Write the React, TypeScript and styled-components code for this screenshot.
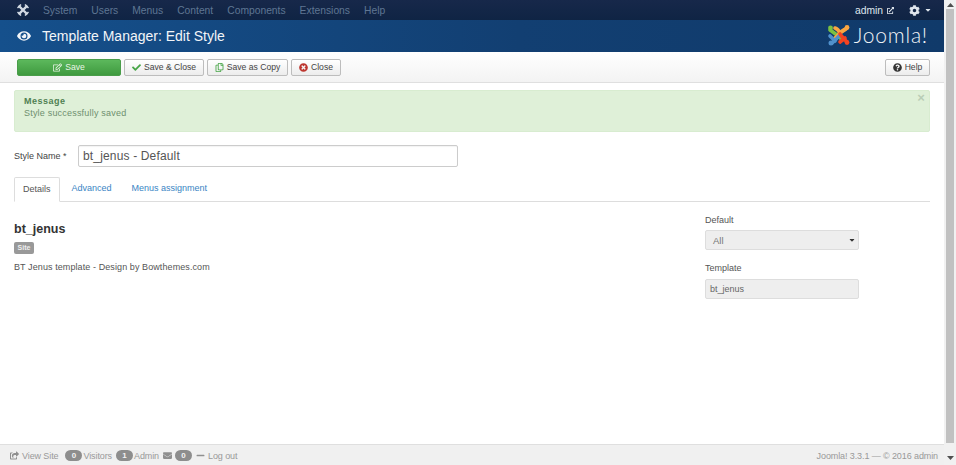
import React from "react";
import styled, { createGlobalStyle } from "styled-components";
import { FaEye, FaCog, FaCheck, FaCaretDown, FaQuestionCircle, FaTimesCircle, FaRegEdit, FaRegCopy, FaExternalLinkAlt, FaEnvelope, FaMinus, FaShareSquare } from "react-icons/fa";

const Global = createGlobalStyle`
  html, body { margin: 0; padding: 0; height: 100%; overflow: hidden; background: #fff; }
  #root { height: 465px; }
  * { box-sizing: border-box; }
  body { font-family: "Liberation Sans", Arial, sans-serif; font-size: 10px; color: #333; }
`;

const Shell = styled.div`display: flex; width: 956px; height: 465px;`;
const Page = styled.div`flex: 1; min-width: 0; display: flex; flex-direction: column;`;

const TopBar = styled.nav`
  height: 20px; flex: none; display: flex; align-items: center; padding: 0 12px 0 17px;
  background: linear-gradient(#17284a, #0f2444); color: #5f7693; font-size: 10.3px;
`;
const TopMenu = styled.div`display: flex; gap: 14px; margin-left: 14px; flex: 1;`;
const TopRight = styled.div`display: flex; align-items: center; color: #dfe6ee; font-size: 10.3px;`;
const SmallIcon = styled.span`display: inline-flex; margin-left: 4px; font-size: 7px;`;
const CogWrap = styled.span`display: inline-flex; align-items: center; margin-left: 15px; gap: 4px; font-size: 11px;`;

const Header = styled.header`
  height: 32px; flex: none; display: flex; align-items: center; padding: 0 16px 0 17px;
  background: linear-gradient(90deg, #15508c, #123f72 55%, #103a6a); color: #f2f5f8;
`;
const HeaderTitle = styled.h1`margin: 0 0 0 11px; font-size: 14px; font-weight: 400; flex: 1; letter-spacing: 0;`;
const Brand = styled.div`display: flex; align-items: center; gap: 4px; margin-top: -3px;`;
const BrandText = styled.span`font-family: Lato, "Liberation Sans", sans-serif; font-weight: 300; font-size: 21px; color: #f2f5f8; line-height: 20px; letter-spacing: .8px;`;

const Toolbar = styled.div`
  height: 31px; flex: none; display: flex; align-items: center; gap: 3px; padding: 0 14px 0 17px;
  background: linear-gradient(#fff, #f3f3f3); border-bottom: 1px solid #dfdfdf;
`;
const Button = styled.button<{ $w: number; $green?: boolean }>`
  width: ${p => p.$w}px; height: 17px; padding: 0; display: inline-flex; align-items: center; justify-content: center; gap: 3px;
  font: 8.6px "Liberation Sans", Arial, sans-serif;
  border-radius: 2px;
  color: ${p => (p.$green ? "#e9f5e6" : "#444")};
  background: ${p => (p.$green ? "linear-gradient(#5cb85c, #3f9a3f)" : "linear-gradient(#fff, #ececec)")};
  border: 1px solid ${p => (p.$green ? "#4a9d4a" : "#bdbdbd")};
`;
const Tint = styled.span<{ $c: string }>`display: inline-flex; color: ${p => p.$c}; font-size: 9px;`;
const Spacer = styled.div`flex: 1;`;

const Content = styled.main`flex: 1; padding: 7px 14px 0 14px; min-height: 0;`;
const Alert = styled.div`
  position: relative; height: 42px; padding: 5px 9px; background: #dff0d8; border-radius: 2px; color: #6e8f6e;
  font-size: 9px; line-height: 11px; letter-spacing: .2px; border: 1px solid #d8ecd0;
`;
const AlertHead = styled.div`font-weight: 700; color: #4f8053; letter-spacing: .5px; margin-bottom: 1px;`;
const AlertClose = styled.span`position: absolute; right: 4px; top: 1px; font-size: 13px; font-weight: 700; line-height: 12px; color: #b9cdb6;`;

const NameRow = styled.div`display: flex; align-items: center; margin-top: 13px;`;
const FieldLabel = styled.label`width: 64px; font-size: 9px; color: #444;`;
const NameInput = styled.div`
  width: 380px; height: 22px; border: 1px solid #ccc; border-radius: 2px; padding-left: 4px;
  font-size: 12px; line-height: 20px; color: #555; letter-spacing: .16px; box-shadow: inset 0 1px 1px rgba(0,0,0,.05);
`;
const Tabs = styled.div`display: flex; margin-top: 10px; height: 25px; border-bottom: 1px solid #ddd; font-size: 9px;`;
const Tab = styled.div<{ $active?: boolean }>`
  height: 25px; padding: 0 10px; line-height: 23px;
  color: ${p => (p.$active ? "#555" : "#3a85c4")};
  ${p => p.$active && "padding: 0 8px; margin-right: 2px; border: 1px solid #ddd; border-bottom-color: #fff; border-radius: 2px 2px 0 0; background:#fff;"}
`;
const Columns = styled.div`display: flex; justify-content: space-between; padding-top: 13px;`;
const Left = styled.div``;
const StyleTitle = styled.h2`margin: 7px 0 0; font-size: 12.5px; line-height: 15px; font-weight: 700; color: #333;`;
const Badge = styled.span`
  display: block; width: 20px; height: 12px; margin-top: 5px; background: #999; color: #eee; border-radius: 2px;
  font-size: 7px; font-weight: 700; line-height: 12px; text-align: center;
`;
const Desc = styled.p`margin: 8px 0 0; font-size: 9px; line-height: 11px; color: #555; letter-spacing: .09px;`;
const Right = styled.div`width: 154px; margin-right: 71px;`;
const SideLabel = styled.div`font-size: 9px; line-height: 11px; color: #555; margin-bottom: 4px;`;
const SideBox = styled.div`
  width: 154px; height: 20px; background: #eee; border: 1px solid #ddd; border-radius: 2px; padding-left: 7px;
  display: flex; align-items: center; justify-content: space-between; font-size: 9.5px; color: #777; margin-bottom: 13px;
`;
const SideValue = styled(SideBox)`padding-left: 4px; font-size: 9px; color: #666; margin: 5px 0 0;`;
const SelectArrow = styled.span`display: inline-flex; color: #333; font-size: 8px; margin-right: 2px;`;

const Footer = styled.footer`
  height: 21px; flex: none; display: flex; align-items: center; padding: 1px 6px 0 10px; background: #f0f0f0;
  border-top: 1px solid #dfdfdf; color: #999; font-size: 9px; letter-spacing: -.1px;
`;
const FootItem = styled.span<{ $after?: number }>`display: inline-flex; align-items: center; gap: 1px; margin-right: ${p => p.$after ?? 4}px;`;
const Pill = styled.span`
  display: inline-block; width: 17px; height: 11px; border-radius: 6px; background: #8d8d8d; color: #f2f2f2;
  font-size: 8px; font-weight: 700; text-align: center; line-height: 11px;
`;
const FootIcon = styled.span`display: inline-flex; color: #8f8f8f; font-size: 9px; margin-right: 2px;`;

const Bar = styled.div`width: 12px; flex: none; display: flex; flex-direction: column; background: #f1f1f1;`;
const BarArrow = styled.div<{ $h: number }>`height: ${p => p.$h}px; flex: none; display: flex; align-items: center; justify-content: center;`;
const Thumb = styled.div`flex: 1; background: #c1c1c1; margin: 0 2px 8px;`;
const Tri = styled.svg`width: 7px; height: 4px; fill: #505050;`;

const Logo = () => (
  <svg width="23" height="22" viewBox="0 0 23 22" fill="none" strokeWidth="3.6" strokeLinecap="round" strokeLinejoin="round">
    <path d="M3 6 C7 9 12 12 15 16" stroke="#7ac143" />
    <path d="M8 4 C11 5 13 9 13 9 L19 5" stroke="#f9a541" />
    <path d="M7 15 L15 7 C17 6 18 5 20 4" stroke="#f9a541" />
    <path d="M5 19 C8 17 10 14 12 12" stroke="#5091cd" />
    <path d="M3 12 L8 17" stroke="#5091cd" />
    <path d="M13 10 C15 13 17 15 20 18" stroke="#f44321" />
    <path d="M13 18 L18 14" stroke="#f44321" />
    <circle cx="3.5" cy="4" r="2.4" fill="#7ac143" />
    <circle cx="20" cy="3.5" r="2.4" fill="#f9a541" />
    <circle cx="4" cy="19" r="2.5" fill="#5091cd" />
    <circle cx="20" cy="18.5" r="2.4" fill="#f44321" />
  </svg>
);

const Mark = () => (
  <svg width="12" height="12" viewBox="0 0 12 12" fill="none" stroke="#d2dae4" strokeWidth="2.4" strokeLinecap="square">
    <path d="M2.5 2.5 L9.5 9.5 M9.5 2.5 L2.5 9.5" />
    <path d="M1 3.5 L3.5 1 M8.5 1 L11 3.5 M1 8.5 L3.5 11 M11 8.5 L8.5 11" strokeWidth="1.5" />
  </svg>
);

export default function App() {
  return (
    <Shell>
      <Global />
      <Page>
        <TopBar>
          <Mark />
          <TopMenu>
            {["System", "Users", "Menus", "Content", "Components", "Extensions", "Help"].map(m => <span key={m}>{m}</span>)}
          </TopMenu>
          <TopRight>
            admin<SmallIcon><FaExternalLinkAlt /></SmallIcon>
            <CogWrap><FaCog /><FaCaretDown size={8} /></CogWrap>
          </TopRight>
        </TopBar>
        <Header>
          <FaEye size={14} />
          <HeaderTitle>Template Manager: Edit Style</HeaderTitle>
          <Brand><Logo /><BrandText>Joomla!</BrandText></Brand>
        </Header>
        <Toolbar>
          <Button $w={104} $green><FaRegEdit size={9} /> Save</Button>
          <Button $w={80}><Tint $c="#46a546"><FaCheck /></Tint>Save &amp; Close</Button>
          <Button $w={81}><Tint $c="#46a546"><FaRegCopy /></Tint>Save as Copy</Button>
          <Button $w={50}><Tint $c="#bd362f"><FaTimesCircle /></Tint>Close</Button>
          <Spacer />
          <Button $w={45}><Tint $c="#333"><FaQuestionCircle /></Tint>Help</Button>
        </Toolbar>
        <Content>
          <Alert>
            <AlertHead>Message</AlertHead>
            Style successfully saved
            <AlertClose>×</AlertClose>
          </Alert>
          <NameRow>
            <FieldLabel>Style Name *</FieldLabel>
            <NameInput>bt_jenus - Default</NameInput>
          </NameRow>
          <Tabs>
            <Tab $active>Details</Tab>
            <Tab>Advanced</Tab>
            <Tab>Menus assignment</Tab>
          </Tabs>
          <Columns>
            <Left>
              <StyleTitle>bt_jenus</StyleTitle>
              <Badge>Site</Badge>
              <Desc>BT Jenus template - Design by Bowthemes.com</Desc>
            </Left>
            <Right>
              <SideLabel>Default</SideLabel>
              <SideBox>All<SelectArrow><FaCaretDown /></SelectArrow></SideBox>
              <SideLabel>Template</SideLabel>
              <SideValue>bt_jenus</SideValue>
            </Right>
          </Columns>
        </Content>
        <Footer>
          <FootItem $after={7}><FootIcon><FaShareSquare /></FootIcon>View Site</FootItem>
          <FootItem><Pill>0</Pill>Visitors</FootItem>
          <FootItem><Pill>1</Pill>Admin</FootItem>
          <FootItem><FootIcon><FaEnvelope /></FootIcon><Pill>0</Pill></FootItem>
          <FootItem><FootIcon><FaMinus /></FootIcon>Log out</FootItem>
          <Spacer />
          <span>Joomla! 3.3.1 — © 2016 admin</span>
        </Footer>
      </Page>
      <Bar>
        <BarArrow $h={9}><Tri viewBox="0 0 7 4"><path d="M3.5 0 L7 4 H0 Z" /></Tri></BarArrow>
        <Thumb />
        <BarArrow $h={14}><Tri viewBox="0 0 7 4"><path d="M0 0 H7 L3.5 4 Z" /></Tri></BarArrow>
      </Bar>
    </Shell>
  );
}
